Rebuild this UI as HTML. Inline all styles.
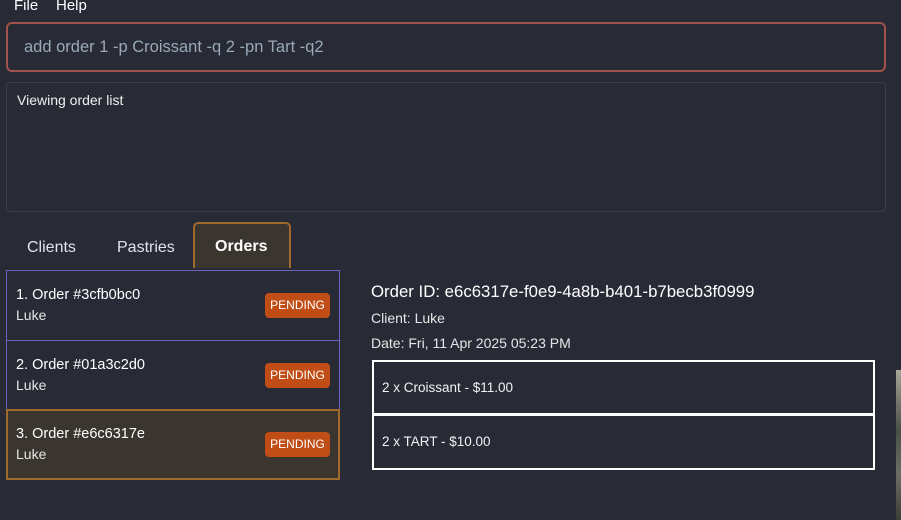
<!DOCTYPE html>
<html><head><meta charset="utf-8"><style>
*{box-sizing:border-box;margin:0;padding:0}
body{width:901px;height:520px;background:#282a36;font-family:"Liberation Sans",sans-serif;color:#fff;position:relative;overflow:hidden}
.a{position:absolute;white-space:nowrap}
.menu{font-size:15px;top:-3px}
.cmd{left:6px;top:22px;width:880px;height:50px;border:2px solid #a0524a;border-radius:6px;background:#282a36}
.cmd span{position:absolute;left:16px;top:14px;font-size:16.5px;color:#9aa8b8}
.res{left:6px;top:82px;width:880px;height:130px;border:1px dotted #5a5048;border-radius:4px}
.res span{position:absolute;left:10px;top:9px;font-size:14px;color:#f0f0f0}
.tab{font-size:16px;color:#e0e4ea;top:239px}
.tabsel{left:193px;top:222px;width:98px;height:46px;border:2px solid #a06a2c;border-bottom:none;border-radius:5px 5px 0 0;background:#3b3530}
.tabsel span{position:absolute;left:20px;top:14px;font-size:16px;font-weight:bold}
.list{left:6px;top:270px;width:334px;height:140px;border:1px solid #6e62c0}
.row{position:absolute;left:0;width:100%;height:70px}
.row .t{position:absolute;left:9px;top:16px;font-size:14.5px}
.row .n{position:absolute;left:9px;top:36px;font-size:14px;color:#e6e6e6}
.pend{position:absolute;right:9px;top:22px;width:65px;height:25px;background:#c04d15;border-radius:4px;font-size:12px;text-align:center;line-height:25px;color:#fff}
.sel{left:6px;top:409px;width:334px;height:71px;border:2px solid #a06a2c;background:#3b3530}
.box{left:372px;width:503px;border:2px solid #fff}
.box span{position:absolute;left:8px;font-size:13.5px;color:#f2f2f2}
</style></head><body>
<div class="a menu" style="left:14px">File</div>
<div class="a menu" style="left:56px">Help</div>
<div class="a cmd"><span>add order 1 -p Croissant -q 2 -pn Tart -q2</span></div>
<div class="a res"><span>Viewing order list</span></div>
<div class="a tab" style="left:27px">Clients</div>
<div class="a tab" style="left:117px">Pastries</div>
<div class="a tabsel"><span>Orders</span></div>
<div class="a list">
 <div class="row" style="top:0;border-bottom:1px solid #6e62c0"><div class="t">1. Order #3cfb0bc0</div><div class="n">Luke</div><div class="pend">PENDING</div></div>
 <div class="row" style="top:70px"><div class="t">2. Order #01a3c2d0</div><div class="n">Luke</div><div class="pend">PENDING</div></div>
</div>
<div class="a sel"><div class="row" style="top:-1px;left:-1px"><div class="t">3. Order #e6c6317e</div><div class="n">Luke</div><div class="pend" style="right:7px">PENDING</div></div></div>
<div class="a" style="left:371px;top:282px;font-size:16.8px">Order ID: e6c6317e-f0e9-4a8b-b401-b7becb3f0999</div>
<div class="a" style="left:371px;top:310px;font-size:14px;color:#e6e6e6">Client: Luke</div>
<div class="a" style="left:371px;top:335px;font-size:14px;color:#e6e6e6">Date: Fri, 11 Apr 2025 05:23 PM</div>
<div class="a box" style="top:360px;height:55px"><span style="top:18px">2 x Croissant - $11.00</span></div>
<div class="a box" style="top:415px;height:55px;border-top:1px solid #fff"><span style="top:18px">2 x TART - $10.00</span></div>
<div class="a" style="left:896px;top:370px;width:5px;height:150px;background:linear-gradient(#a8a598,#4a5048 40%,#6a6e64 70%,#3a3e38)"></div>
</body></html>
